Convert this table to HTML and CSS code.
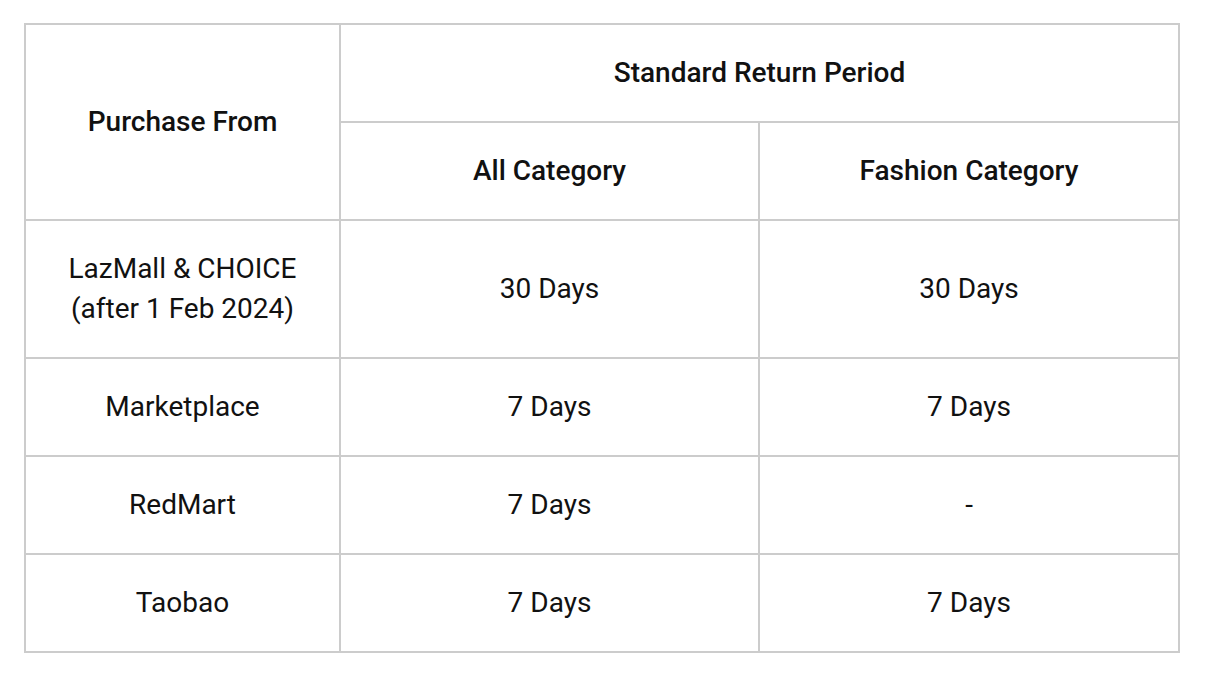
FILE: index.html
```html
<!DOCTYPE html>
<html>
<head>
<meta charset="utf-8">
<link rel="stylesheet" href="styles.css">
</head>
<body>
<table class="returns">
  <colgroup>
    <col class="c1">
    <col class="c2">
    <col class="c3">
  </colgroup>
  <thead>
    <tr>
      <th rowspan="2">Purchase From</th>
      <th colspan="2">Standard Return Period</th>
    </tr>
    <tr>
      <th>All Category</th>
      <th>Fashion Category</th>
    </tr>
  </thead>
  <tbody>
    <tr>
      <td>LazMall &amp; CHOICE<br>(after 1 Feb 2024)</td>
      <td>30 Days</td>
      <td>30 Days</td>
    </tr>
    <tr>
      <td>Marketplace</td>
      <td>7 Days</td>
      <td>7 Days</td>
    </tr>
    <tr>
      <td>RedMart</td>
      <td>7 Days</td>
      <td>-</td>
    </tr>
    <tr>
      <td>Taobao</td>
      <td>7 Days</td>
      <td>7 Days</td>
    </tr>
  </tbody>
</table>
</body>
</html>
```
FILE: styles.css
```css
html, body {
  margin: 0;
  padding: 0;
  background: #fff;
}
body {
  padding: 23px 24px 24px;
  font-family: Roboto, "Liberation Sans", sans-serif;
  color: #111;
}
.returns {
  border-collapse: collapse;
  table-layout: fixed;
  width: 1154px;
}
.c1 { width: 315px; }
.c2 { width: 419px; }
.c3 { width: 420px; }
.returns th,
.returns td {
  border: 2px solid #cccccc;
  padding: 28px 10px;
  font-size: 28px;
  line-height: 40px;
  text-align: center;
  vertical-align: middle;
}
.returns th {
  font-weight: 500;
}
.returns td {
  font-weight: 400;
}
```
